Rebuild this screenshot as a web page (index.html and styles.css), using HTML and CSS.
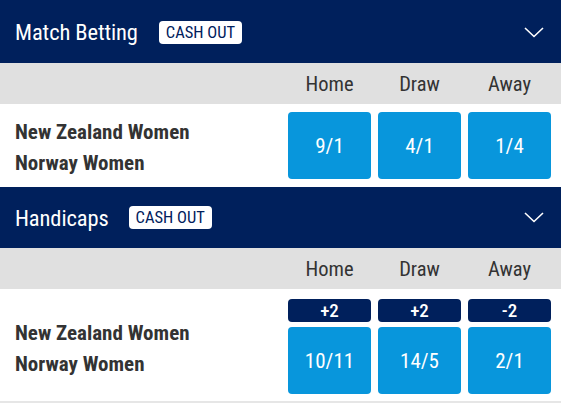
FILE: index.html
```html
<!DOCTYPE html>
<html>
<head>
<meta charset="utf-8">
<link rel="stylesheet" href="styles.css">
</head>
<body>
<section class="market">
  <header class="market-head head-first">
    <h2 class="market-title">Match Betting</h2>
    <span class="badge">CASH OUT</span>
    <svg class="chevron" width="20" height="11" viewBox="0 0 20 11"><path d="M1 1 L10 9.5 L19 1" fill="none" stroke="#fff" stroke-width="1.6"/></svg>
  </header>
  <div class="cols">
    <span>Home</span><span>Draw</span><span>Away</span>
  </div>
  <div class="row row-plain">
    <div class="teams">
      <div>New Zealand Women</div>
      <div>Norway Women</div>
    </div>
    <div class="odds">
      <button class="price">9/1</button>
      <button class="price">4/1</button>
      <button class="price">1/4</button>
    </div>
  </div>
</section>
<section class="market">
  <header class="market-head head-second">
    <h2 class="market-title">Handicaps</h2>
    <span class="badge">CASH OUT</span>
    <svg class="chevron" width="20" height="11" viewBox="0 0 20 11"><path d="M1 1 L10 9.5 L19 1" fill="none" stroke="#fff" stroke-width="1.6"/></svg>
  </header>
  <div class="cols">
    <span>Home</span><span>Draw</span><span>Away</span>
  </div>
  <div class="row row-hcap">
    <div class="teams">
      <div>New Zealand Women</div>
      <div>Norway Women</div>
    </div>
    <div class="odds">
      <div class="cell"><span class="line">+2</span><button class="price">10/11</button></div>
      <div class="cell"><span class="line">+2</span><button class="price">14/5</button></div>
      <div class="cell"><span class="line">-2</span><button class="price">2/1</button></div>
    </div>
  </div>
</section>
</body>
</html>
```

FILE: styles.css
```css
* { box-sizing: border-box; }
body {
  margin: 0;
  width: 561px;
  background: #fff;
  font-family: Roboto, "Liberation Sans", sans-serif;
  font-stretch: 85%;
  overflow: hidden;
}
.market-head {
  background: #00205c;
  display: flex;
  align-items: center;
  padding: 0 17px 0 15px;
  color: #fff;
}
.head-first { height: 63px; padding-top: 1px; }
.head-second { height: 61px; }
.market-title {
  margin: 0;
  font-size: 22.5px;
  font-weight: 400;
  letter-spacing: -0.1px;
}
.badge {
  margin-left: 21px;
  background: #fff;
  color: #00205c;
  border-radius: 4px;
  font-size: 16.5px;
  height: 23px;
  line-height: 23px;
  padding: 0 7px;
}
.head-second .badge { margin-left: 20px; }
.chevron { margin-left: auto; }
.cols {
  background: #e0e0e0;
  height: 41px;
  display: grid;
  grid-template-columns: repeat(3, 83px);
  column-gap: 7px;
  justify-content: end;
  padding-right: 10px;
  align-items: center;
}
.cols span {
  text-align: center;
  font-size: 20.5px;
  color: #333;
  padding-top: 1px;
}
.row {
  display: flex;
  align-items: center;
  justify-content: space-between;
  padding-right: 10px;
}
.row-plain { height: 83px; }
.row-hcap { height: 114px; border-bottom: 2px solid #e6e6e6; padding-top: 3px; }
.teams {
  padding-left: 15px;
  padding-top: 4px;
  font-weight: 700;
  font-size: 21px;
  color: #333;
  line-height: 31px;
}
.odds {
  display: grid;
  grid-template-columns: repeat(3, 83px);
  column-gap: 7px;
}
.price {
  border: 0;
  margin: 0;
  height: 67px;
  width: 83px;
  background: #0896dc;
  color: #fff;
  font-family: inherit;
  font-stretch: 85%;
  font-size: 21px;
  border-radius: 4px;
  padding: 0;
}
.cell {
  display: flex;
  flex-direction: column;
  gap: 5px;
}
.line {
  background: #00205c;
  color: #fff;
  height: 23px;
  line-height: 23px;
  border-radius: 4px;
  text-align: center;
  font-size: 19px;
  font-weight: 500;
}
```
